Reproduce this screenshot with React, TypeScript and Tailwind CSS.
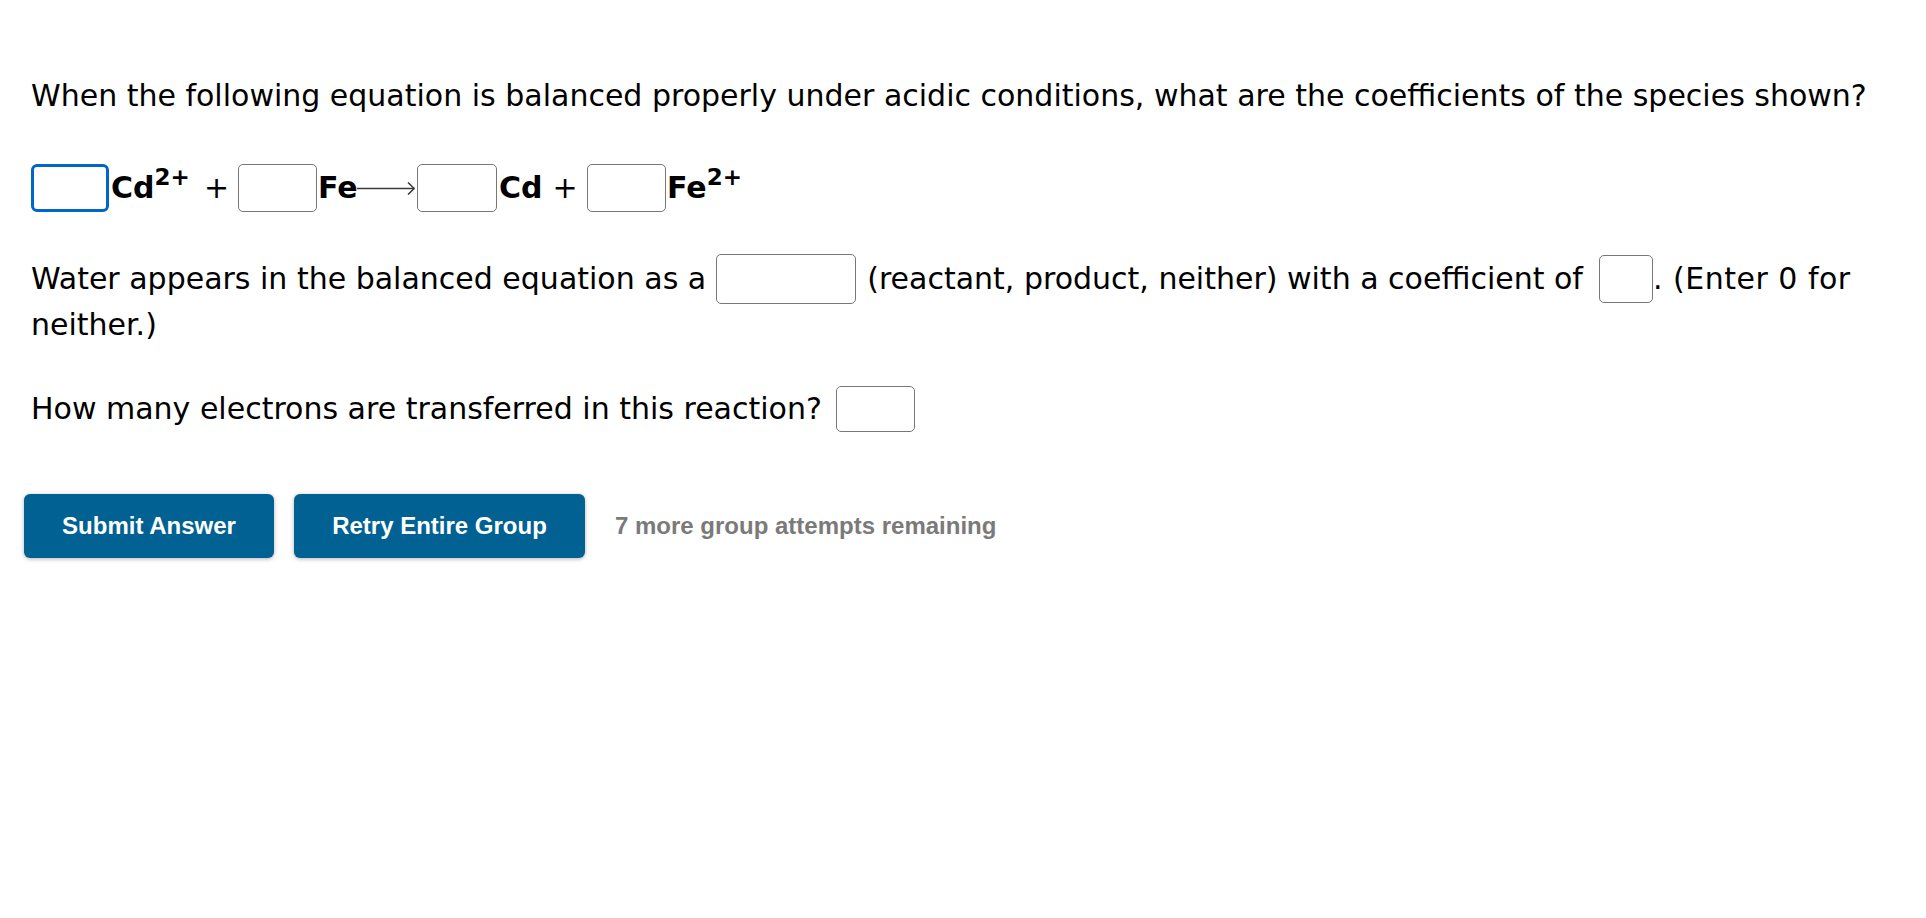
const box = "shrink-0 rounded-[5px] border-[1.5px] border-[#777777] bg-white";

function Arrow() {
  return (
    <svg width="58" height="14" viewBox="0 0 58 14" className="shrink-0">
      <line x1="0" y1="7.5" x2="57" y2="7.5" stroke="#3a3a3a" strokeWidth="1.6" />
      <path d="M51 1.5 L57.2 7.5 L51 13.5" fill="none" stroke="#3a3a3a" strokeWidth="1.6" />
    </svg>
  );
}

export default function App() {
  return (
    <div className="min-h-[918px] w-full bg-white font-['DejaVu_Sans',sans-serif] text-[30px] text-black">
      <div className="flex flex-col pt-[78px] pl-[31px]">
        <div className="flex h-[36px] items-center whitespace-nowrap leading-none">
          When the following equation is balanced properly under acidic conditions, what are the coefficients of the species shown?
        </div>

        <div className="mt-[50px] flex h-[48px] items-center leading-none">
          <div className="h-[48px] w-[78px] shrink-0 rounded-[6px] border-[3px] border-[#0066cc] bg-white" />
          <div className="w-[82px] shrink-0 pl-[2px] text-[30px] font-bold whitespace-nowrap">
            Cd<span className="relative top-[-13px] text-[23px]">2+</span>
          </div>
          <div className="w-[47px] shrink-0 pl-[4px] text-center text-[30px]">+</div>
          <div className={`${box} h-[48px] w-[79px]`} />
          <div className="w-[40px] shrink-0 pl-[1px] text-[30px] font-bold">Fe</div>
          <Arrow />
          <div className={`${box} ml-[2px] h-[48px] w-[80px]`} />
          <div className="w-[46px] shrink-0 pl-[2px] text-[30px] font-bold">Cd</div>
          <div className="w-[44px] shrink-0 text-center text-[30px]">+</div>
          <div className={`${box} h-[48px] w-[79px]`} />
          <div className="shrink-0 pl-[1px] text-[30px] font-bold whitespace-nowrap">
            Fe<span className="relative top-[-13px] text-[23px]">2+</span>
          </div>
        </div>

        <div className="mt-[41px] flex h-[51px] items-center whitespace-nowrap leading-none">
          <span>Water appears in the balanced equation as a</span>
          <div className={`${box} ml-[10px] h-[50px] w-[140px]`} />
          <span className="ml-[11px]">(reactant, product, neither) with a coefficient of</span>
          <div className={`${box} ml-[16px] h-[48px] w-[54px]`} />
          <span className="tracking-[0.5px]">. (Enter 0 for</span>
        </div>

        <div className="mt-[3px] flex h-[36px] items-center leading-none">neither.)</div>

        <div className="mt-[43px] flex h-[46px] items-center whitespace-nowrap leading-none">
          <span>How many electrons are transferred in this reaction?</span>
          <div className={`${box} ml-[14px] h-[46px] w-[79px]`} />
        </div>

        <div className="mt-[62px] -ml-[7px] flex items-center font-['Liberation_Sans',Arial,sans-serif] text-[24px] font-bold leading-none">
          <button className="flex h-[64px] w-[250px] items-center justify-center rounded-[6px] bg-[#006192] text-white shadow-[0_1px_4px_rgba(0,0,0,0.3)]">
            Submit Answer
          </button>
          <button className="ml-[20px] flex h-[64px] w-[291px] items-center justify-center rounded-[6px] bg-[#006192] text-white shadow-[0_1px_4px_rgba(0,0,0,0.3)]">
            Retry Entire Group
          </button>
          <span className="ml-[30px] text-[#7a7a7a]">7 more group attempts remaining</span>
        </div>
      </div>
    </div>
  );
}
